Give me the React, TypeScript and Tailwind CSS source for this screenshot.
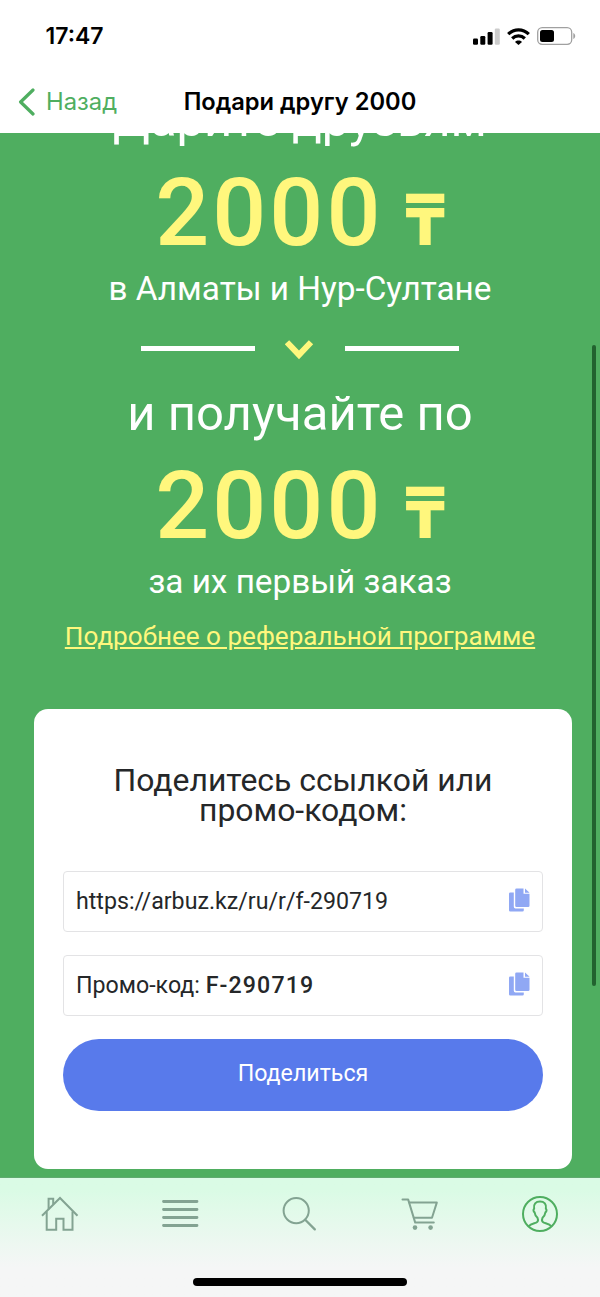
import React from 'react';

const inter = "font-['Inter','Liberation_Sans',sans-serif]";
const roboto = "font-['Roboto','Liberation_Sans',sans-serif]";

function StatusBar() {
  return (
    <div className="flex h-[72px] items-center justify-between pl-[45.5px] pr-[24px]">
      <span className="text-[23px] font-semibold leading-none text-black">17:47</span>
      <div className="flex items-center gap-[7px]">
        {/* signal */}
        <svg width="27" height="17" viewBox="0 0 27 17">
          <rect x="0" y="10.5" width="5" height="6.3" rx="1.2" />
          <rect x="7.3" y="8" width="5" height="8.8" rx="1.2" />
          <rect x="14.6" y="4" width="5" height="12.8" rx="1.2" />
          <rect x="21.8" y="0.5" width="5" height="16.3" rx="1.2" fill="#cccccc" />
        </svg>
        {/* wifi */}
        <svg width="23" height="17" viewBox="0 0 23 17" fill="none" stroke="#000" strokeWidth="3.2">
          <path d="M1.2 6.2C7 .5 16 .5 21.8 6.2" />
          <path d="M5.2 10.5c3.5-3.5 9.1-3.5 12.6 0" />
          <path d="M8 14c2-1.9 5-1.9 7 0L11.5 17z" fill="#000" stroke="none" />
        </svg>
        {/* battery */}
        <svg width="39" height="18" viewBox="0 0 39 18">
          <rect x="0.7" y="0.7" width="34" height="16.6" rx="4.5" fill="none" stroke="#a0a0a0" strokeWidth="1.3" />
          <rect x="3" y="3" width="14" height="12" rx="2.5" />
          <path d="M36.3 6c2.5.8 2.5 5.2 0 6z" fill="#a0a0a0" />
        </svg>
      </div>
    </div>
  );
}

function NavBar() {
  return (
    <div className="grid h-[61px] grid-cols-[1fr_auto_1fr] items-center pb-[2px]">
      <button className="flex items-center gap-[10px] pl-[18px] text-[#4fae60]">
        <svg width="18" height="28" viewBox="0 0 18 28" fill="none" stroke="currentColor" strokeWidth="3.2" strokeLinecap="round" strokeLinejoin="round">
          <path d="M15 2L2.6 14 15 26" />
        </svg>
        <span className="text-[23.8px] leading-none">Назад</span>
      </button>
      <h1 className="text-[23.7px] font-semibold leading-none text-black">Подари другу 2000</h1>
    </div>
  );
}

function Amount() {
  return (
    <p className="flex h-[100px] items-baseline justify-center pl-px text-[95px] font-medium leading-[100px] tracking-[3.1px] text-[#fff77d]">
      2000
      <span className="ml-[21px] font-['Noto_Sans',sans-serif] text-[72px] font-bold leading-none tracking-normal">₸</span>
    </p>
  );
}

function CopyField({ children }: { children: React.ReactNode }) {
  return (
    <div className="flex h-[61px] items-center justify-between rounded-[4px] border-[1.5px] border-[#e3e3e5] px-[12px] text-[23.2px] text-[#252729]">
      <span className="whitespace-nowrap">{children}</span>
      <svg className="mb-[4px]" width="21" height="24" viewBox="0 0 21 24" fill="#90a8f4">
        <path d="M7.5 0.5h7v5.3h6v12a1.3 1.3 0 0 1-1.3 1.3H7.5a1.3 1.3 0 0 1-1.3-1.3v-16a1.3 1.3 0 0 1 1.3-1.3z" />
        <path d="M16 0.5l4.6 4.2H16z" />
        <path d="M1.3 4.5h3.5v14.2a1.7 1.7 0 0 0 1.7 1.7h8.3v1.8a1.3 1.3 0 0 1-1.3 1.3H1.3A1.3 1.3 0 0 1 0 22.2V5.8a1.3 1.3 0 0 1 1.3-1.3z" />
      </svg>
    </div>
  );
}

function TabBar() {
  return (
    <nav className="flex h-[120px] flex-col items-center justify-between border-t border-[#60aa70] bg-linear-to-b from-[#dafbe5] from-10% to-[#f5f6f6] to-75% pb-[11px]">
      <div className="grid h-[72px] w-full grid-cols-5 items-center justify-items-center">
        {/* home */}
        <svg width="40" height="38" viewBox="0 0 40 38" fill="none" stroke="#83a392" strokeWidth="2">
          <path d="M2 20.7L20 3l17.5 17.7" />
          <path d="M6.7 16.5v18.2h9.5V23.7h7.3v11h9V16.5" />
          <path d="M8.6 14.3V3.7h4.6v5.6" />
        </svg>
        {/* catalog */}
        <svg width="38" height="38" viewBox="0 0 38 38" stroke="#83a392" strokeWidth="2.8" strokeLinecap="round">
          <path d="M2.5 6.5h33.5M2.5 14.5h33.5M2.5 22.5h33.5M2.5 30.5h33.5" />
        </svg>
        {/* search */}
        <svg width="38" height="38" viewBox="0 0 38 38" fill="none" stroke="#83a392" strokeWidth="2" strokeLinecap="round">
          <circle cx="15.2" cy="15.6" r="12.6" />
          <path d="M24.2 24.8l9.6 9.6" strokeWidth="2.3" />
        </svg>
        {/* cart */}
        <svg width="38" height="38" viewBox="0 0 38 38" fill="none" stroke="#83a392" strokeWidth="2" strokeLinecap="round" strokeLinejoin="round">
          <path d="M1.5 4.6h5.7l7 23h18.6" />
          <path d="M8.3 7.6h27.5L31 22.7H12.8" />
          <circle cx="14" cy="32.6" r="2.3" fill="#83a392" stroke="none" />
          <circle cx="29.6" cy="32.6" r="2.3" fill="#83a392" stroke="none" />
        </svg>
        {/* profile */}
        <svg width="38" height="38" viewBox="0 0 38 38" fill="none" stroke="#4fae60" strokeWidth="2">
          <circle cx="19" cy="19" r="17" />
          <path d="M7.6 31.3c2-2.2 5.5-2.8 7.6-3.7 2.2-1 2-3 1.3-4.8-2-1.7-2.6-3.4-2.9-5.5-1.3-.8-1.5-2.7-.5-3.6-.9-4.8 1.8-7.2 5.9-7.2s6.8 2.4 5.9 7.2c1 .9.8 2.8-.5 3.6-.3 2.1-.9 3.8-2.9 5.5-.7 1.8-.9 3.8 1.3 4.8 2.1.9 5.6 1.5 7.6 3.7" />
        </svg>
      </div>
      <div className="h-[8px] w-[214px] rounded-full bg-black" />
    </nav>
  );
}

export default function App() {
  return (
    <div className={`flex h-[1297px] w-[600px] flex-col overflow-hidden bg-[#4fae60] ${inter}`}>
      <header className="shrink-0 bg-white">
        <StatusBar />
        <NavBar />
      </header>

      <main className={`relative flex-1 overflow-hidden text-center text-white ${roboto}`}>
        <p className="-mt-[33px] h-[40px] whitespace-nowrap text-[49px] leading-[40px]">Дарите друзьям</p>
        <div className="mt-[23px]">
          <Amount />
        </div>
        <p className="mt-[6px] h-[40px] text-[33.3px] leading-[40px]">в Алматы и Нур-Султане</p>

        {/* divider */}
        <div className="mt-[29px] flex h-[20px] items-center justify-center gap-[30px]">
          <span className="h-[5px] w-[114px] bg-white" />
          <svg className="mt-[3px]" width="30" height="20" viewBox="0 0 30 20" fill="none" stroke="#fff77d" strokeWidth="6">
            <path d="M2 2.2L14 14.8 26 2.2" />
          </svg>
          <span className="h-[5px] w-[114px] bg-white" />
        </div>

        <p className="mt-[26px] h-[60px] text-[49px] leading-[60px]">и получайте по</p>
        <div className="mt-[12px]">
          <Amount />
        </div>
        <p className="mt-[6px] h-[40px] text-[33.3px] leading-[40px]">за их первый заказ</p>
        <a className="mt-[18px] block h-[32px] text-[26.1px] leading-[32px] text-[#fff77d] underline">
          Подробнее о реферальной программе
        </a>

        {/* share card */}
        <section className="ml-[34px] mt-[57px] h-[460px] w-[538px] rounded-[14px] bg-white px-[29px] pt-[56px]">
          <h2 className="h-[60px] text-[31.9px] leading-[30px] text-[#252729]">
            Поделитесь ссылкой или
            <br />
            промо-кодом:
          </h2>
          <div className="mt-[46px] flex flex-col gap-[23px]">
            <CopyField>https://arbuz.kz/ru/r/f-290719</CopyField>
            <CopyField>
              Промо-код: <b className="font-medium tracking-[1.1px]">F-290719</b>
            </CopyField>
            <button className="h-[72px] rounded-full bg-[#587aeb] pb-[4px] text-[23.2px] text-white">Поделиться</button>
          </div>
        </section>

        {/* scroll thumb */}
        <span className="absolute right-[4px] top-[212px] h-[641px] w-[4px] rounded-full bg-[#22622f]" />
      </main>

      <TabBar />
    </div>
  );
}
